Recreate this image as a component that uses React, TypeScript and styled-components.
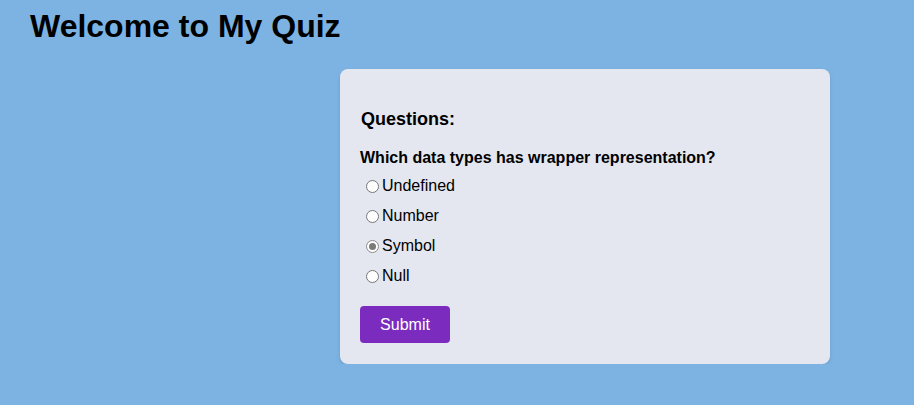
import React from "react";
import styled, { createGlobalStyle } from "styled-components";

const Global = createGlobalStyle`
  html, body { margin: 0; padding: 0; }
  body {
    background: #7db3e3;
    font-family: "Liberation Sans", Arial, sans-serif;
    color: #000;
  }
`;

const Page = styled.div`
  padding: 0 30px;
  display: flex;
  flex-direction: column;
`;

const Title = styled.h1`
  font-size: 32px;
  font-weight: bold;
  margin: 8px 0 24px 0;
  line-height: 37px;
`;

const Card = styled.form`
  margin-left: 310px;
  width: 490px;
  box-sizing: border-box;
  background: #e4e7f0;
  border-radius: 8px;
  box-shadow: 0 2px 4px rgba(0, 0, 0, 0.12);
  padding: 39px 20px 21px 20px;
  display: flex;
  flex-direction: column;
  align-items: flex-start;
`;

const Heading = styled.h3`
  font-size: 18px;
  font-weight: bold;
  margin: 0 0 19px 1px;
  line-height: 22px;
`;

const Question = styled.p`
  font-size: 16px;
  font-weight: bold;
  margin: 0 0 4px 0;
  line-height: 18px;
`;

const Options = styled.div`
  display: flex;
  flex-direction: column;
`;

const Option = styled.label`
  display: flex;
  align-items: center;
  height: 30px;
  font-size: 16px;
  padding-left: 6px;
`;

const Radio = styled.input`
  appearance: none;
  margin: 0 3px 0 0;
  width: 13px;
  height: 13px;
  box-sizing: border-box;
  border: 1px solid #767676;
  border-radius: 50%;
  background: #fff;
  display: grid;
  place-items: center;
  &:checked {
    border-color: #8a8a8a;
  }
  &:checked::after {
    content: "";
    width: 7px;
    height: 7px;
    border-radius: 50%;
    background: #7a7a7a;
  }
`;

const Submit = styled.button`
  margin-top: 15px;
  width: 90px;
  height: 37px;
  border: none;
  border-radius: 4px;
  background: #7b2cbf;
  color: #fff;
  font-family: "Liberation Sans", Arial, sans-serif;
  font-size: 16px;
  cursor: pointer;
`;

const options = ["Undefined", "Number", "Symbol", "Null"];

export default function App() {
  return (
    <>
      <Global />
      <Page>
        <Title>Welcome to My Quiz</Title>
        <Card onSubmit={(e) => e.preventDefault()}>
          <Heading>Questions:</Heading>
          <Question>Which data types has wrapper representation?</Question>
          <Options>
            {options.map((o) => (
              <Option key={o}>
                <Radio type="radio" name="q" defaultChecked={o === "Symbol"} />
                {o}
              </Option>
            ))}
          </Options>
          <Submit type="submit">Submit</Submit>
        </Card>
      </Page>
    </>
  );
}
